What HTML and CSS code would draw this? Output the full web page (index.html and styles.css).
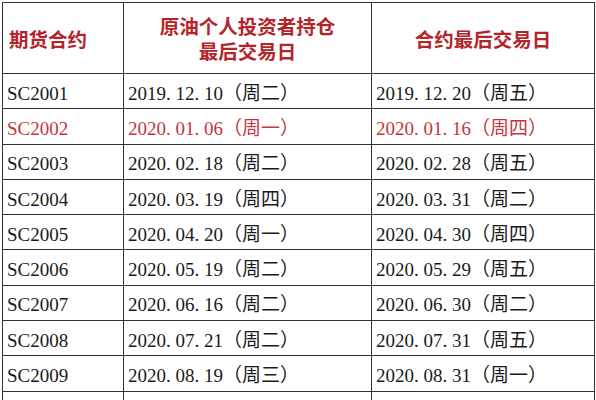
FILE: index.html
```html
<!DOCTYPE html>
<html lang="zh-CN">
<head>
<meta charset="utf-8">
<title>原油期货合约最后交易日</title>
<link rel="stylesheet" href="styles.css">
</head>
<body>
<table class="sheet">
  <colgroup>
    <col class="c1">
    <col class="c2">
    <col class="c3">
  </colgroup>
  <thead>
    <tr class="head">
      <th class="left">期货合约</th>
      <th><span class="ln">原油个人投资者持仓</span><span class="ln">最后交易日</span></th>
      <th>合约最后交易日</th>
    </tr>
  </thead>
  <tbody>
    <tr><td>SC2001</td><td>2019<span class="dot">.</span>12<span class="dot">.</span>10（周二）</td><td>2019<span class="dot">.</span>12<span class="dot">.</span>20（周五）</td></tr>
    <tr class="hl"><td>SC2002</td><td>2020<span class="dot">.</span>01<span class="dot">.</span>06（周一）</td><td>2020<span class="dot">.</span>01<span class="dot">.</span>16（周四）</td></tr>
    <tr><td>SC2003</td><td>2020<span class="dot">.</span>02<span class="dot">.</span>18（周二）</td><td>2020<span class="dot">.</span>02<span class="dot">.</span>28（周五）</td></tr>
    <tr><td>SC2004</td><td>2020<span class="dot">.</span>03<span class="dot">.</span>19（周四）</td><td>2020<span class="dot">.</span>03<span class="dot">.</span>31（周二）</td></tr>
    <tr><td>SC2005</td><td>2020<span class="dot">.</span>04<span class="dot">.</span>20（周一）</td><td>2020<span class="dot">.</span>04<span class="dot">.</span>30（周四）</td></tr>
    <tr><td>SC2006</td><td>2020<span class="dot">.</span>05<span class="dot">.</span>19（周二）</td><td>2020<span class="dot">.</span>05<span class="dot">.</span>29（周五）</td></tr>
    <tr><td>SC2007</td><td>2020<span class="dot">.</span>06<span class="dot">.</span>16（周二）</td><td>2020<span class="dot">.</span>06<span class="dot">.</span>30（周二）</td></tr>
    <tr><td>SC2008</td><td>2020<span class="dot">.</span>07<span class="dot">.</span>21（周二）</td><td>2020<span class="dot">.</span>07<span class="dot">.</span>31（周五）</td></tr>
    <tr><td>SC2009</td><td>2020<span class="dot">.</span>08<span class="dot">.</span>19（周三）</td><td>2020<span class="dot">.</span>08<span class="dot">.</span>31（周一）</td></tr>
    <tr><td>SC2010</td><td>2020<span class="dot">.</span>09<span class="dot">.</span>21（周一）</td><td>2020<span class="dot">.</span>09<span class="dot">.</span>30（周三）</td></tr>
  </tbody>
</table>
</body>
</html>
```
FILE: styles.css
```css
html, body {
  margin: 0;
  padding: 0;
  background: #fff;
}
body {
  padding: 2px 0 0 2px;
  font-family: "Liberation Serif", "Noto Sans CJK SC", serif;
  color: #1a1a1a;
}
.sheet {
  border-collapse: collapse;
  table-layout: fixed;
  width: 592px;
}
.c1 { width: 121px; }
.c2 { width: 248px; }
.c3 { width: 223px; }
.sheet th,
.sheet td {
  border: 1.5px solid #333;
  padding: 0 0 0 4px;
  white-space: nowrap;
  overflow: hidden;
}
.head {
  height: 71px;
}
.head th {
  font-family: "Noto Sans CJK SC", sans-serif;
  font-weight: 700;
  font-size: 19.5px;
  line-height: 25px;
  color: #b3242b;
  text-align: center;
  padding: 0;
}
.head .ln {
  display: block;
  height: 25px;
}
.head th.left {
  text-align: left;
  padding-left: 6px;
}
.sheet tbody tr {
  height: 35.3px;
}
.sheet td {
  font-size: 19px;
  line-height: 22px;
  padding-top: 5px;
  vertical-align: middle;
}
.dot {
  letter-spacing: 0.25em;
}
.hl td {
  color: #c2383c;
}
```
